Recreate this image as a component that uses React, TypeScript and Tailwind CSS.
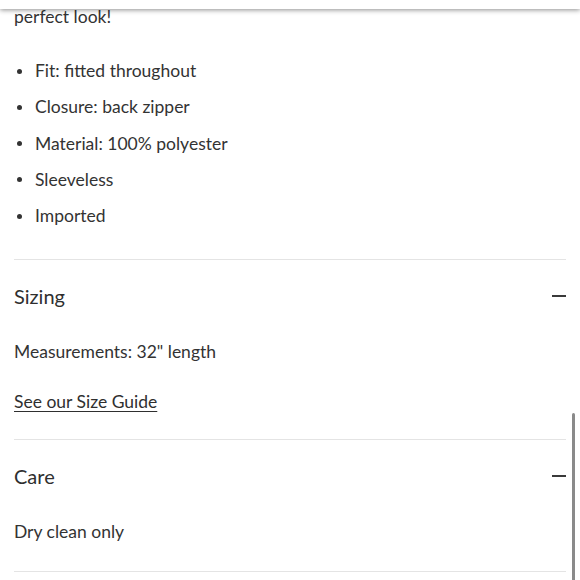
import React from "react";

const bullets = [
  "Fit: fitted throughout",
  "Closure: back zipper",
  "Material: 100% polyester",
  "Sleeveless",
  "Imported",
];

const Minus = () => (
  <span className="block w-[14px] h-[1.5px] bg-[#3a3a3a]" />
);

const SectionHeader: React.FC<{ title: string }> = ({ title }) => (
  <div className="flex items-center justify-between pt-[22px] h-[50px]">
    <h2 className="text-[20px] leading-[28px] text-[#2f2f2f]">{title}</h2>
    <Minus />
  </div>
);

export default function App() {
  return (
    <div
      className="relative w-[580px] h-[580px] overflow-hidden bg-white text-[#333]"
      style={{ fontFamily: "Lato, 'Noto Sans', sans-serif" }}
    >
      <div className="absolute top-0 left-0 right-0 h-[9px] bg-white shadow-[0_1px_5px_rgba(0,0,0,0.45)] z-10" />
      <div className="absolute right-[5px] top-[413px] w-[3px] h-[180px] rounded-full bg-[#8a8a8a] z-10" />

      <div className="px-[14px]">
        <p className="pt-[5px] text-[17.5px] leading-[24px]">perfect look!</p>

        <ul className="mt-[30px] flex flex-col gap-[12.25px]">
          {bullets.map((b) => (
            <li key={b} className="flex items-center text-[17.5px] leading-[24px]">
              <span className="w-[5px] h-[5px] rounded-full bg-[#333] ml-[3px] mr-[13px]" />
              {b}
            </li>
          ))}
        </ul>

        <div className="mt-[31px] border-t border-[#e4e4e4]">
          <SectionHeader title="Sizing" />
          <p className="mt-[30px] text-[17.5px] leading-[24px]">Measurements: 32" length</p>
          <a href="#" className="block mt-[26px] text-[17.5px] leading-[24px] underline underline-offset-[3px] text-[#2f2f2f]">
            See our Size Guide
          </a>
        </div>

        <div className="mt-[25px] border-t border-[#e4e4e4]">
          <SectionHeader title="Care" />
          <p className="mt-[30px] text-[17.5px] leading-[24px]">Dry clean only</p>
        </div>

        <div className="mt-[27px] border-t border-[#e4e4e4]" />
      </div>
    </div>
  );
}
